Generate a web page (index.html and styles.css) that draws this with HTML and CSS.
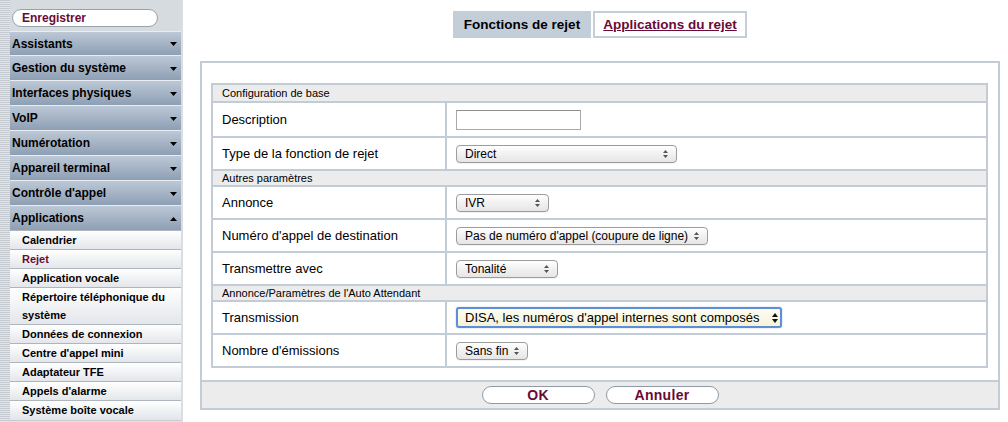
FILE: index.html
```html
<!DOCTYPE html>
<html lang="fr">
<head>
<meta charset="utf-8">
<title>Fonctions de rejet</title>
<link rel="stylesheet" href="styles.css">
</head>
<body>
<div class="page">
  <aside class="sidebar">
    <div class="save-wrap"><button class="save" type="button">Enregistrer</button></div>
    <nav class="menu">
      <div class="m-item"><span>Assistants</span><svg class="caret" width="7" height="4" viewBox="0 0 7 4"><path d="M0 0H7L3.5 4Z"/></svg></div>
      <div class="m-item"><span>Gestion du système</span><svg class="caret" width="7" height="4" viewBox="0 0 7 4"><path d="M0 0H7L3.5 4Z"/></svg></div>
      <div class="m-item"><span>Interfaces physiques</span><svg class="caret" width="7" height="4" viewBox="0 0 7 4"><path d="M0 0H7L3.5 4Z"/></svg></div>
      <div class="m-item"><span>VoIP</span><svg class="caret" width="7" height="4" viewBox="0 0 7 4"><path d="M0 0H7L3.5 4Z"/></svg></div>
      <div class="m-item"><span>Numérotation</span><svg class="caret" width="7" height="4" viewBox="0 0 7 4"><path d="M0 0H7L3.5 4Z"/></svg></div>
      <div class="m-item"><span>Appareil terminal</span><svg class="caret" width="7" height="4" viewBox="0 0 7 4"><path d="M0 0H7L3.5 4Z"/></svg></div>
      <div class="m-item"><span>Contrôle d'appel</span><svg class="caret" width="7" height="4" viewBox="0 0 7 4"><path d="M0 0H7L3.5 4Z"/></svg></div>
      <div class="m-item"><span>Applications</span><svg class="caret" width="7" height="4" viewBox="0 0 7 4"><path d="M0 4H7L3.5 0Z"/></svg></div>
      <div class="sub">Calendrier</div>
      <div class="sub active">Rejet</div>
      <div class="sub">Application vocale</div>
      <div class="sub two">Répertoire téléphonique du système</div>
      <div class="sub">Données de connexion</div>
      <div class="sub">Centre d'appel mini</div>
      <div class="sub">Adaptateur TFE</div>
      <div class="sub">Appels d'alarme</div>
      <div class="sub">Système boîte vocale</div>
    </nav>
  </aside>

  <main class="main">
    <div class="tabs">
      <div class="tab current">Fonctions de rejet</div>
      <div class="tab other"><a href="#">Applications du rejet</a></div>
    </div>

    <section class="panel">
      <div class="panel-body">
        <table class="form">
          <tr class="sec first"><td colspan="2">Configuration de base</td></tr>
          <tr class="row tall">
            <td class="lbl">Description</td>
            <td class="val"><input class="text" type="text"></td>
          </tr>
          <tr class="row">
            <td class="lbl">Type de la fonction de rejet</td>
            <td class="val"><div class="sel w-direct"><span>Direct</span><svg class="arr" width="5" height="8" viewBox="0 0 5 8"><path d="M0 3H5L2.5 0Z M0 5H5L2.5 8Z"/></svg></div></td>
          </tr>
          <tr class="sec"><td colspan="2">Autres paramètres</td></tr>
          <tr class="row">
            <td class="lbl">Annonce</td>
            <td class="val"><div class="sel w-ivr"><span>IVR</span><svg class="arr" width="5" height="8" viewBox="0 0 5 8"><path d="M0 3H5L2.5 0Z M0 5H5L2.5 8Z"/></svg></div></td>
          </tr>
          <tr class="row">
            <td class="lbl">Numéro d'appel de destination</td>
            <td class="val"><div class="sel w-pas"><span>Pas de numéro d'appel (coupure de ligne)</span><svg class="arr" width="5" height="8" viewBox="0 0 5 8"><path d="M0 3H5L2.5 0Z M0 5H5L2.5 8Z"/></svg></div></td>
          </tr>
          <tr class="row">
            <td class="lbl">Transmettre avec</td>
            <td class="val"><div class="sel w-ton"><span>Tonalité</span><svg class="arr" width="5" height="8" viewBox="0 0 5 8"><path d="M0 3H5L2.5 0Z M0 5H5L2.5 8Z"/></svg></div></td>
          </tr>
          <tr class="sec"><td colspan="2">Annonce/Paramètres de l'Auto Attendant</td></tr>
          <tr class="row">
            <td class="lbl">Transmission</td>
            <td class="val"><div class="sel focus w-disa"><span>DISA, les numéros d'appel internes sont composés</span><i class="sep"></i><svg class="arr big" width="6" height="10" viewBox="0 0 6 10"><path d="M0 4H6L3 0Z M0 6H6L3 10Z"/></svg></div></td>
          </tr>
          <tr class="row">
            <td class="lbl">Nombre d'émissions</td>
            <td class="val"><div class="sel w-sans"><span>Sans fin</span><svg class="arr" width="5" height="8" viewBox="0 0 5 8"><path d="M0 3H5L2.5 0Z M0 5H5L2.5 8Z"/></svg></div></td>
          </tr>
        </table>
      </div>
      <div class="actions">
        <button class="btn" type="button">OK</button>
        <button class="btn" type="button">Annuler</button>
      </div>
    </section>
  </main>
</div>
</body>
</html>
```
FILE: styles.css
```css
* { box-sizing: border-box; }
html, body { margin: 0; padding: 0; background: #ffffff; }
body {
  font-family: "Liberation Sans", Arial, sans-serif;
  color: #000;
  width: 1008px;
  height: 422px;
  overflow: hidden;
}
.page { display: flex; align-items: flex-start; height: 422px; }

/* Sidebar */
.sidebar {
  width: 183px;
  height: 422px;
  flex: none;
  padding-left: 10px;
  border-right: 2px solid #d9dee4;
  background: repeating-linear-gradient(to bottom, #c6cbd1 0, #c6cbd1 1px, #e1e4e8 1px, #e1e4e8 2px);
}
.save-wrap {
  height: 31px;
  padding: 9px 0 0 2px;
  background: #d6dbe0;
}
.save {
  display: block;
  width: 146px;
  height: 18px;
  border: 1px solid #98a2ad;
  border-radius: 9px;
  background: #fff;
  color: #6a0a36;
  font: bold 12px "Liberation Sans", Arial, sans-serif;
  text-align: left;
  padding: 0 0 0 9px;
  line-height: 16px;
}
.menu { width: 171px; display: flex; flex-direction: column; }
.m-item {
  height: 25px;
  border-top: 1px solid #e9edf1;
  background: linear-gradient(to bottom, #bcc8d6, #8e9fb4);
  display: flex;
  align-items: center;
  justify-content: space-between;
  padding: 0 4px 0 2px;
  font-weight: bold;
  font-size: 12px;
  color: #000;
}
.m-item:first-child { height: 24px; }
.caret { fill: #000; display: block; margin-top: 1px; }
.sub {
  border-top: 1px solid #aeb5bd;
  background: linear-gradient(to bottom, #ffffff, #e3e6ea);
  padding: 0 6px 0 12px;
  font-weight: bold;
  font-size: 11px;
  line-height: 18px;
  color: #000;
}
.sub.active { color: #6a0a36; }

/* Main */
.main {
  flex: 1;
  padding: 11px 8px 0 17px;
}
.tabs {
  display: flex;
  justify-content: center;
  gap: 2px;
  height: 27px;
  width: 800px;
}
.tab {
  height: 27px;
  display: flex;
  align-items: center;
  justify-content: center;
  font-weight: bold;
  font-size: 13.5px;
}
.tab.current { width: 138px; background: #c3ced9; color: #000; }
.tab.other { width: 154px; border: 2px solid #c3ced9; background: #fff; }
.tab.other a { color: #6a0a36; text-decoration: underline; }

.panel {
  margin-top: 23px;
  width: 800px;
  height: 349px;
  border: 2px solid #c1ccd7;
  display: flex;
  flex-direction: column;
}
.panel-body {
  padding: 20px 10px 0 9px;
  flex: 1;
}
.form {
  width: 777px;
  border-collapse: separate;
  border-spacing: 0;
  border: 2px solid #c1ccd7;
}
.form td { padding: 0; box-sizing: content-box; }
.form tr + tr td { border-top: 2px solid #c1ccd7; }
.sec td {
  background: #ececec;
  font-size: 11px;
  height: 14px;
  line-height: 14px;
  padding-left: 9px;
}
.sec.first td { height: 16px; }
.row td { height: 31px; vertical-align: middle; }
.row.tall td { height: 33px; }
.lbl {
  width: 223px;
  border-right: 2px solid #c1ccd7;
  padding-left: 9px !important;
  font-size: 13px;
}
.val { padding-left: 9px !important; }

.text {
  display: block;
  width: 125px;
  height: 20px;
  border: 1px solid #a9a9a9;
  border-top-color: #8e8e8e;
  background: #fff;
  margin: 0;
}
.sel {
  height: 18px;
  border: 1px solid #9c9c9c;
  border-radius: 4px;
  background: linear-gradient(to bottom, #ffffff, #f1f1f1 50%, #e6e6e6);
  display: flex;
  align-items: center;
  justify-content: space-between;
  padding: 0 8px 0 8px;
  font-size: 12px;
  color: #000;
  box-shadow: 0 1px 0 rgba(0,0,0,0.05);
}
.sel span { white-space: nowrap; }
.arr { fill: #555; display: block; flex: none; }
.w-direct { width: 221px; }
.w-ivr { width: 93px; }
.w-pas { width: 252px; }
.w-ton { width: 102px; }
.w-sans { width: 72px; }
.w-disa { width: 326px; }
.sel.focus {
  height: 21px;
  border: 2px solid #5d8ed8;
  border-radius: 3px;
  background: linear-gradient(to bottom, #fdfcf0, #f6f2d9);
  font-size: 13px;
  padding: 0 6px 0 7px;
  box-shadow: 0 0 1px #3e6fb8;
}
.sel.focus .sep {
  width: 1px;
  align-self: stretch;
  background: #c8c3a8;
  margin-left: auto;
  margin-right: 5px;
}
.sel.focus span { margin-right: 8px; }
.arr.big { fill: #111; }

.actions {
  height: 28px;
  border-top: 2px solid #c1ccd7;
  background: #ececec;
  display: flex;
  justify-content: center;
  align-items: center;
  gap: 11px;
}
.btn {
  width: 113px;
  height: 18px;
  border: 1px solid #8f9aa6;
  border-radius: 9px;
  background: #fff;
  color: #6a0a36;
  font: bold 14px "Liberation Sans", Arial, sans-serif;
  letter-spacing: 0.3px;
  line-height: 16px;
  padding: 0;
}
```
